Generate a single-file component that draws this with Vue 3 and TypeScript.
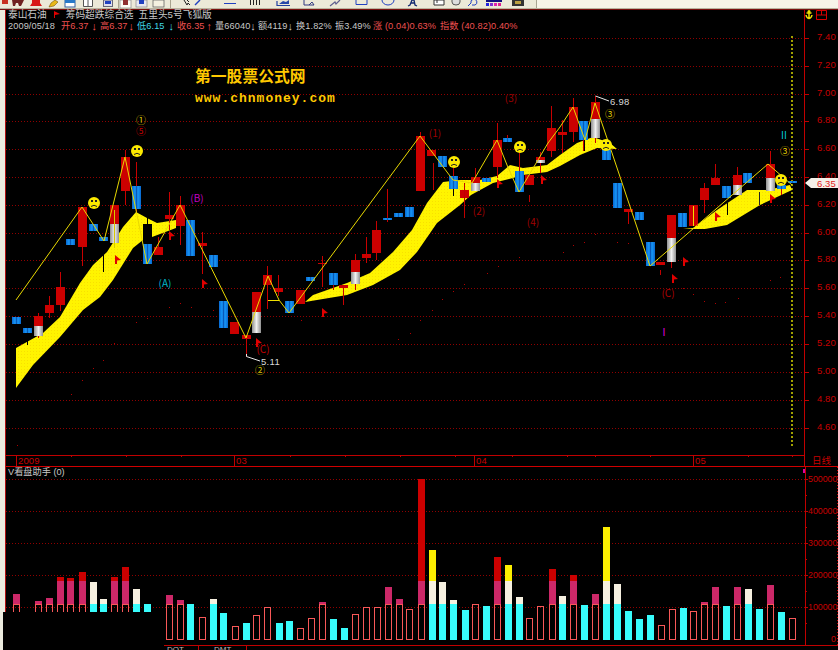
<script setup lang="ts">
type Kind = 'r' | 'b' | 'g' | 'k'
// left, body top, body bottom, wick top, wick bottom, kind, split (red/grey only)
type Candle = [number, number, number, number, number, Kind, number?]

const candles: Candle[] = [
  [12, 317, 324, 317, 324, 'b'], [23, 328, 333, 328, 333, 'b'], [34, 316, 336, 313, 338, 'g', 326],
  [45, 305, 313, 296, 318, 'r'], [56, 287, 305, 272, 311, 'r'], [66, 239, 245, 239, 245, 'b'],
  [78, 207, 247, 207, 266, 'r'], [89, 224, 231, 224, 231, 'b'], [99, 237, 241, 237, 241, 'b'],
  [110, 205, 243, 205, 248, 'g', 224], [121, 157, 191, 150, 205, 'r'], [132, 186, 209, 162, 213, 'b'],
  [143, 224, 243, 218, 247, 'k'], [143, 244, 264, 244, 264, 'b'], [154, 247, 255, 237, 255, 'r'],
  [165, 215, 219, 192, 230, 'r'], [176, 205, 226, 196, 245, 'r'], [186, 220, 256, 220, 256, 'b'],
  [198, 243, 246, 232, 274, 'r'], [209, 255, 267, 255, 267, 'b'], [219, 301, 328, 301, 328, 'b'],
  [230, 322, 334, 322, 334, 'r'], [242, 335, 339, 335, 357, 'r'], [252, 292, 333, 292, 333, 'g', 312],
  [263, 275, 285, 266, 309, 'r'], [274, 288, 292, 275, 296, 'r'], [285, 301, 313, 301, 313, 'b'],
  [296, 290, 304, 290, 304, 'r'], [306, 277, 281, 277, 281, 'b'], [318, 263, 264, 256, 287, 'r'],
  [329, 273, 285, 273, 290, 'b'], [339, 285, 288, 285, 305, 'r'], [351, 260, 284, 254, 290, 'g', 272],
  [362, 254, 258, 237, 263, 'r'], [372, 230, 253, 221, 260, 'r'], [383, 218, 220, 189, 222, 'b'],
  [394, 213, 217, 213, 217, 'b'], [405, 207, 217, 207, 217, 'b'], [416, 136, 191, 132, 191, 'r'],
  [427, 150, 156, 150, 156, 'r'], [438, 156, 167, 156, 167, 'b'], [449, 176, 189, 168, 196, 'b'],
  [460, 190, 198, 183, 218, 'r'], [471, 177, 191, 168, 191, 'g', 183], [482, 178, 182, 178, 182, 'b'],
  [493, 140, 167, 123, 178, 'r'], [503, 138, 142, 135, 142, 'b'], [515, 171, 192, 150, 192, 'b'],
  [525, 175, 185, 175, 185, 'r'], [536, 157, 163, 152, 173, 'g', 160], [547, 128, 151, 106, 157, 'r'],
  [558, 132, 135, 120, 153, 'r'], [569, 107, 132, 98, 142, 'r'], [579, 121, 140, 121, 151, 'b'],
  [591, 102, 138, 96, 143, 'g', 119], [602, 150, 160, 150, 160, 'b'], [613, 183, 208, 183, 208, 'b'],
  [624, 209, 212, 209, 224, 'r'], [635, 212, 220, 212, 220, 'b'], [646, 242, 266, 242, 266, 'b'],
  [656, 262, 265, 262, 265, 'r'], [667, 215, 262, 215, 268, 'g', 238], [678, 213, 227, 213, 227, 'b'],
  [689, 205, 226, 205, 226, 'r'], [700, 188, 200, 183, 213, 'r'], [711, 178, 185, 164, 185, 'r'],
  [722, 186, 198, 186, 198, 'b'], [733, 175, 195, 167, 195, 'g', 185], [743, 173, 183, 173, 183, 'b'],
  [766, 164, 191, 151, 191, 'g', 178], [777, 185, 189, 185, 195, 'b'], [788, 181, 183, 181, 183, 'b'],
]

// detached wick pieces and the thin lines that sit on the band
const strokes: [number, number, number, string][] = [
  [433, 163, 190, '#c00000'], [464, 183, 218, '#c00000'], [529, 195, 202, '#c00000'], [660, 270, 275, '#c00000'],
  [114, 210, 248, '#d8c800'], [693, 206, 226, '#f0e000'], [103, 253, 272, '#000'], [27, 340, 345, '#000'],
  [727, 203, 215, '#000'], [759, 192, 205, '#222'], [584, 140, 151, '#000'], [453, 189, 196, '#000'],
]

const bands = [
  '16,348 43,333 60,317 80,283 93,265 107,252 123,227 136,212 147,218 157,223 176,220 176,228 152,237 143,240 133,248 113,280 100,297 83,310 60,337 33,365 16,388',
  '305,302 313,295 347,283 370,273 393,252 412,230 427,203 443,182 460,180 480,180 497,176 510,165 523,168 547,165 560,155 577,143 593,137 610,143 617,149 597,148 580,155 560,166 547,172 523,175 513,178 493,183 471,195 460,205 437,223 417,252 400,270 373,285 347,295',
  '683,229 693,228 717,210 747,190 767,190 790,185 792,190 760,205 727,225 705,229',
]

const zigzag =
  '16,300 82,207 104,241 125,157 136,210 147,264 180,205 246,338 268,276 279,300 289,313 420,136 453,180 472,183 497,140 507,165 519,192 548,143 560,127 573,107 585,140 595,103 610,147 650,266 768,164 792,185'

const flags = [
  [115, 259], [169, 235], [202, 283], [256, 342], [322, 312], [497, 183], [541, 179], [683, 261], [672, 278], [715, 216], [770, 198],
]
const faces = [[137, 151], [94, 203], [454, 162], [520, 147], [606, 145], [781, 180]]

const dust = [
  [301, 320], [420, 320], [464, 284], [453, 291], [442, 299], [432, 310], [410, 333], [398, 339], [498, 266], [487, 273], [519, 257],
  [595, 234], [584, 242], [573, 245], [563, 252], [617, 242], [628, 243], [770, 280], [780, 277], [693, 294], [704, 301], [715, 303],
  [725, 302], [738, 298], [683, 288], [147, 318], [136, 322], [180, 303], [169, 307], [191, 307], [213, 310], [114, 343], [103, 360],
  [93, 368], [82, 380], [71, 394], [17, 445],
]

const marks: { x: number; y: number; text: string; color: string }[] = [
  { x: 141, y: 124, text: '①', color: '#e0d000' },
  { x: 141, y: 135, text: '⑤', color: '#c80000' },
  { x: 197, y: 202, text: '(B)', color: '#c000c0' },
  { x: 165, y: 287, text: '(A)', color: '#00b8c8' },
  { x: 263, y: 353, text: '(C)', color: '#c00000' },
  { x: 260, y: 374, text: '②', color: '#d8c800' },
  { x: 435, y: 137, text: '(1)', color: '#a00000' },
  { x: 479, y: 215, text: '(2)', color: '#a00000' },
  { x: 511, y: 102, text: '(3)', color: '#a00000' },
  { x: 533, y: 226, text: '(4)', color: '#a00000' },
  { x: 610, y: 118, text: '③', color: '#e0d000' },
  { x: 784, y: 139, text: 'II', color: '#00c8d8' },
  { x: 785, y: 155, text: '③', color: '#e0d000' },
  { x: 668, y: 297, text: '(C)', color: '#b00000' },
  { x: 664, y: 336, text: 'I', color: '#e000e0' },
]

const gridY = [38, 66, 94, 121, 149, 177, 205, 233, 260, 288, 316, 344, 372, 400, 428]
const priceLabels = ['7.40', '7.20', '7.00', '6.80', '6.60', '6.40', '6.20', '6.00', '5.80', '5.60', '5.40', '5.20', '5.00', '4.80', '4.60']

const shortTicks = [71, 126, 181, 290, 345, 400, 455, 512, 567, 595, 650, 748, 792]
const longTicks = [16, 234, 474, 693]

// center x, top y, up day?
const bars: [number, number, boolean][] = [
  [16, 594, true], [38, 601, true], [49, 598, true], [60, 577, true], [70, 578, true], [82, 572, true], [93, 582, false],
  [103, 599, false], [114, 577, true], [125, 567, true], [136, 589, false], [147, 604, false], [169, 595, true], [180, 600, true],
  [190, 604, false], [202, 617, true], [213, 599, false], [223, 613, false], [235, 626, true], [246, 623, false], [256, 615, true],
  [267, 607, true], [279, 623, false], [289, 621, false], [300, 628, true], [311, 618, true], [322, 602, true], [333, 619, false],
  [344, 628, false], [355, 614, true], [366, 607, true], [377, 607, true], [388, 587, true], [399, 599, true], [409, 609, true],
  [421, 479, true], [432, 550, false], [442, 582, false], [453, 600, false], [465, 610, false], [475, 604, true], [486, 606, false],
  [497, 557, true], [508, 565, false], [519, 597, false], [529, 618, true], [540, 606, true], [552, 569, true], [562, 596, false],
  [573, 575, true], [584, 605, false], [595, 594, true], [606, 527, false], [617, 584, false], [628, 611, false], [639, 619, false],
  [650, 615, false], [661, 625, true], [672, 609, true], [683, 608, false], [693, 611, true], [704, 602, true], [715, 587, true],
  [726, 606, false], [737, 587, true], [748, 589, false], [759, 609, false], [770, 585, true], [781, 612, false], [792, 618, true],
]
const LOW = 604
const HIGH = 581
const BASE = 639

const volumeGrid = [479, 511, 543, 575, 607]
const volumeLabels = [
  { y: 482, text: '500000' }, { y: 514, text: '400000' }, { y: 546, text: '300000' },
  { y: 578, text: '200000' }, { y: 610, text: '100000' },
]

const quotes = [
  { w: 53, label: '2009/05/18', color: '#c8c8c8' },
  { w: 39, label: '开6.37', color: '#ee5050', arrow: '↓' },
  { w: 37, label: '高6.37', color: '#ee5050', arrow: '↓' },
  { w: 40, label: '低6.15', color: '#40d8e8', arrow: '↓' },
  { w: 38, label: '收6.35', color: '#ee5050', arrow: '↑' },
  { w: 43, label: '量66040', color: '#c8c8c8', arrow: '↓' },
  { w: 38, label: '额4119', color: '#c8c8c8', arrow: '↓' },
  { w: 39, label: '换1.82%', color: '#c8c8c8' },
  { w: 38, label: '振3.49%', color: '#c8c8c8' },
  { w: 67, label: '涨 (0.04)0.63%', color: '#ee5050' },
  { w: 80, label: '指数 (40.82)0.40%', color: '#ee5050' },
]

const toolbarSeparators = [118, 170, 536]
</script>

<template>
  <div class="app">
    <div class="toolbar">
      <svg width="838" height="10" viewBox="0 0 838 10">
        <rect x="537" width="301" height="8" fill="#f7f4e8" />
        <rect x="2" y="0" width="6" height="4" fill="#c83020" />
        <path d="M12 0h12l-3 6h-2l-1-3h-2l-1 3h-2z" fill="#702020" />
        <path d="M30 6h12l-2-3V0h-8v3z" fill="#d81818" />
        <path d="M49 7l2-4 4-3 3 2-4 4z" fill="#e8b818" stroke="#604000" stroke-width=".5" />
        <rect x="65" y="0" width="10" height="7" fill="#fff" stroke="#3060a0" />
        <rect x="65" y="0" width="10" height="3" fill="#2878c8" />
        <path d="M83.5 0v6.5h9V0M88 0v6" fill="#fff" stroke="#555" />
        <rect x="103.5" y="0" width="9" height="6.5" fill="#dde" stroke="#667" />
        <rect x="105" y="1" width="6" height="3" fill="#2040c0" />
        <rect x="120" y="0" width="11" height="8" fill="#fdfcf4" stroke="#888" stroke-width=".7" />
        <rect x="123" y="0" width="5" height="5" fill="#903030" />
        <rect x="136" y="0" width="11" height="7" fill="#e8e8f0" stroke="#888" stroke-width=".7" />
        <rect x="139" y="0" width="5" height="4" fill="#2040c0" />
        <rect x="153" y="0" width="11" height="7" fill="#f4f0e0" stroke="#555" stroke-width=".7" />
        <path d="M184 0l3 5 1-2 2 2M187 0l2 2" fill="none" stroke="#222" />
        <path d="M195 5l5-5" stroke="#2040c0" stroke-width="1.4" />
        <path d="M224 3.500h12" stroke="#2040c0" />
        <path d="M250.500 0v5M253.500 0v5M256.500 0v5M259.500 0v5" stroke="#222" />
        <path d="M277 1v4.500h13" fill="none" stroke="#2040a0" stroke-width="1.200" />
        <path d="M279 4l4-3 3 1 3-2v4h-10z" fill="#2848a8" />
        <path d="M304 0v5h10l-2-3-3 3" fill="none" stroke="#303880" />
        <path d="M330 6l5-4 1 2 4-4" fill="none" stroke="#606090" stroke-width="1.200" />
        <path d="M356 0v4.500h11V0" fill="none" stroke="#2040c0" />
        <path d="M382 0a6 5 0 0 0 12 0" fill="none" stroke="#2040c0" />
        <path d="M408 6l2-1 2-5h2l1 5 2 1M411 3h4" fill="none" stroke="#102870" stroke-width="1.300" />
        <path d="M434 0h10v5h-10zM437 0v3" fill="#fff" stroke="#333" />
        <path d="M452 0v2a4 3 0 0 0 8 0V0" fill="#ddd" stroke="#555" />
        <path d="M468 6l3-3a3 3 0 1 1 4 2h-3" fill="none" stroke="#2040c0" />
        <g>
          <rect x="486" y="0" width="16" height="2" fill="#101080" />
          <rect x="486" y="3" width="3" height="3" fill="#2020e0" />
          <rect x="490" y="3" width="3" height="3" fill="#8030d0" />
          <rect x="494" y="3" width="3" height="3" fill="#e020b0" />
          <rect x="498" y="3" width="3" height="3" fill="#e02090" />
        </g>
        <rect x="512" y="0" width="12" height="6" fill="#333" />
        <rect x="515" y="1" width="6" height="3" fill="#bba040" />
        <path
          v-for="x in toolbarSeparators"
          :key="x"
          :d="`M${x + 0.5} 0v8`"
          stroke="#a8a490"
        />
        <rect y="8" width="838" height="1" fill="#b8b4a0" />
        <rect y="9" width="838" height="1" fill="#7a1010" />
      </svg>
    </div>

    <div class="workspace">
      <div class="edge"></div>
      <div class="panels">
        <section class="price-panel">
          <svg class="canvas" width="832" height="456" viewBox="6 10 832 456">
            <defs>
              <linearGradient id="blue-body">
                <stop offset="0" stop-color="#0868d0" />
                <stop offset=".35" stop-color="#1898f8" />
                <stop offset=".5" stop-color="#0858b8" />
                <stop offset=".65" stop-color="#1898f8" />
                <stop offset="1" stop-color="#0868d0" />
              </linearGradient>
              <linearGradient id="grey-body">
                <stop offset="0" stop-color="#909090" />
                <stop offset=".5" stop-color="#f0f0f0" />
                <stop offset="1" stop-color="#909090" />
              </linearGradient>
              <pattern id="band-dither" width="3" height="3" patternUnits="userSpaceOnUse">
                <rect width="3" height="3" fill="#fff400" />
                <rect width="1" height="1" fill="#f8e000" />
              </pattern>
            </defs>

            <path
              v-for="y in gridY"
              :key="y"
              :d="`M6 ${y + 0.5}H804`"
              class="grid"
            />
            <path v-for="y in gridY" :key="'t' + y" :d="`M805 ${y + 0.5}h4`" class="tick" />
            <path d="M792 36V446" class="olive" />

            <polygon v-for="p in bands" :key="p" :points="p" fill="url(#band-dither)" />
            <rect v-for="d in dust" :key="d.join()" :x="d[0]" :y="d[1]" width="1" height="1" fill="#b00000" />

            <g v-for="(c, i) in candles" :key="i" shape-rendering="crispEdges">
              <rect :x="c[0] + 4" :y="c[3]" width="1" :height="c[4] - c[3]" :fill="c[5] === 'k' ? '#000' : '#c80000'" />
              <rect
                v-if="c[5] === 'b'"
                :x="c[0]"
                :y="c[1]"
                width="9"
                :height="c[2] - c[1]"
                fill="url(#blue-body)"
              />
              <rect
                v-else-if="c[5] === 'k'"
                :x="c[0]"
                :y="c[1]"
                width="9"
                :height="c[2] - c[1]"
                fill="#000"
              />
              <template v-else-if="c[5] === 'g'">
                <rect :x="c[0]" :y="c[1]" width="9" :height="(c[6] ?? 0) - c[1]" fill="#cc0000" />
                <rect :x="c[0]" :y="c[6]" width="9" :height="c[2] - (c[6] ?? 0)" fill="url(#grey-body)" />
              </template>
              <rect v-else :x="c[0]" :y="c[1]" width="9" :height="c[2] - c[1]" fill="#cc0000" />
            </g>
            <rect v-for="s in strokes" :key="s.join()" :x="s[0]" :y="s[1]" width="1" :height="s[2] - s[1]" :fill="s[3]" />
            <rect x="268" y="300" width="11" height="1" fill="#f0e000" />

            <polyline :points="zigzag" fill="none" stroke="#e8d800" stroke-width="1" />

            <polygon
              v-for="f in flags"
              :key="f.join()"
              :points="`${f[0]},${f[1] - 4} ${f[0] + 6},${f[1] + 1} ${f[0] + 2},${f[1] + 1.5} ${f[0] + 2},${f[1] + 5} ${f[0]},${f[1] + 5}`"
              fill="#e00000"
            />

            <g v-for="f in faces" :key="f.join()" :transform="`translate(${f[0]} ${f[1]})`">
              <circle r="6" fill="#fbe900" />
              <rect x="-3" y="-3" width="2" height="2" fill="#222" />
              <rect x="1" y="-3" width="2" height="2" fill="#222" />
              <path d="M-3 3.500q3-2.500 6 0" fill="none" stroke="#222" />
            </g>

            <text
              v-for="m in marks"
              :key="m.x + m.text"
              :x="m.x"
              :y="m.y"
              :fill="m.color"
              class="mark"
            >{{ m.text }}</text>

            <path d="M595.500 96L609 101" class="leader" />
            <text x="610" y="105" class="price-note">6.98</text>
            <path d="M246.500 354v2.500L260 361" class="leader" fill="none" />
            <text x="261" y="365" class="price-note">5.11</text>

            <text x="195" y="82" class="brand">第一股票公式网</text>
            <text x="195" y="102" class="brand-url">www.chnmoney.com</text>

            <rect x="804" y="10" width="1" height="456" fill="#c00000" />
            <text
              v-for="(t, i) in priceLabels"
              :key="t"
              x="817"
              :y="gridY[i] + 2"
              class="axis-label"
            >{{ t }}</text>

            <path d="M809 11v7M806.500 13h5M806 15q.5 3 3 3.500q2.500-.5 3-3.500" fill="none" stroke="#f0e000" stroke-width="1.500" />
            <circle cx="809" cy="11.500" r="1.500" fill="#f0e000" />
            <path d="M816.500 10.500h10v9h-10zM816.500 15h10M821.500 10.500v4.500" fill="none" stroke="#d80000" />

            <polygon points="805,183 811,178 838,178 838,188 811,188" fill="#f4f0e8" />
            <text x="817" y="186.500" class="axis-label current">6.35</text>

            <path d="M6 455.500H804" stroke="#c00000" />
            <path v-for="x in shortTicks" :key="x" :d="`M${x + 0.5} 455v2`" stroke="#c00000" />
            <path v-for="x in longTicks" :key="x" :d="`M${x + 0.5} 455v11`" stroke="#c00000" />
            <text x="18" y="464" class="axis-label">2009</text>
            <text x="236" y="464" class="axis-label">03</text>
            <text x="476" y="464" class="axis-label">04</text>
            <text x="695" y="464" class="axis-label">05</text>
            <text x="812" y="464" class="axis-label cjk">日线</text>
          </svg>

          <div class="title-row">
            <span>泰山石油</span>
            <svg class="flag" width="6" height="7" viewBox="0 0 6 7"><path d="M0 0l6 3-5 1v3H0z" fill="#e00000" /></svg>
            <span>筹码超跌综合选</span>
            <span>五里头5号飞狐版</span>
          </div>
          <div class="quote-row">
            <span
              v-for="q in quotes"
              :key="q.label"
              class="quote"
              :style="{ width: q.w + 'px', color: q.color }"
            >
              <span>{{ q.label }}</span>
              <span v-if="q.arrow" class="arrow">{{ q.arrow }}</span>
            </span>
          </div>
        </section>

        <section class="volume-panel">
          <svg class="canvas" width="832" height="184" viewBox="6 466 832 184">
            <path d="M6 466.500H838" stroke="#d00000" />
            <path
              v-for="y in volumeGrid"
              :key="y"
              :d="`M6 ${y + 0.5}H805`"
              class="grid"
            />

            <g v-for="b in bars" :key="b[0]" shape-rendering="crispEdges">
              <template v-if="b[2]">
                <rect :x="b[0] - 2.5" :y="Math.max(b[1], LOW) + 0.5" width="6" :height="BASE - Math.max(b[1], LOW)" fill="none" stroke="#f85858" />
                <rect v-if="b[1] < LOW" :x="b[0] - 3" :y="Math.max(b[1], HIGH)" width="7" :height="LOW - Math.max(b[1], HIGH)" fill="#cc2868" />
                <rect v-if="b[1] < HIGH" :x="b[0] - 3" :y="b[1]" width="7" :height="HIGH - b[1]" fill="#cc0000" />
              </template>
              <template v-else>
                <rect :x="b[0] - 3" :y="Math.max(b[1], LOW)" width="7" :height="BASE + 1 - Math.max(b[1], LOW)" fill="#38fcfc" />
                <rect v-if="b[1] < LOW" :x="b[0] - 3" :y="Math.max(b[1], HIGH)" width="7" :height="LOW - Math.max(b[1], HIGH)" fill="#f6f0e0" />
                <rect v-if="b[1] < HIGH" :x="b[0] - 3" :y="b[1]" width="7" :height="HIGH - b[1]" fill="#fcee00" />
              </template>
            </g>

            <path d="M164 645.500H838" stroke="#c00000" />
            <path d="M198.500 645v5M246.500 645v5" stroke="#c00000" />
            <text x="167" y="652" class="tab-label">DOT</text>
            <text x="214" y="652" class="tab-label">DMT</text>

            <rect x="805" y="467" width="1" height="178" fill="#c00000" />
            <path d="M837.500 467V645" class="grid strong" />
            <rect x="803" y="469" width="2" height="4" fill="#e000a0" />
            <path v-for="y in volumeGrid" :key="'m' + y" :d="`M805 ${y + 16.5}h2`" class="tick" />
            <path v-for="y in volumeGrid" :key="'n' + y" :d="`M805 ${y + 0.5}h3`" class="tick" />
            <text
              v-for="l in volumeLabels"
              :key="l.text"
              x="808"
              :y="l.y"
              class="axis-label narrow"
            >{{ l.text }}</text>
            <text x="831" y="642" class="axis-label narrow">0</text>
          </svg>
          <div class="volume-title">V看盘助手 (0)</div>
        </section>
      </div>
      <div class="corner-mask"></div>
    </div>
  </div>
</template>

<style scoped>
.app {
  width: 838px;
  height: 650px;
  overflow: hidden;
  background: #000;
  font-family: "Liberation Sans", "Noto Sans CJK SC", sans-serif;
}
.toolbar {
  height: 10px;
  background: #ece9d8;
}
.toolbar svg {
  display: block;
}
.workspace {
  position: relative;
  display: flex;
  height: 640px;
}
.edge {
  width: 5px;
  background: #ecebdf;
  border-right: 1px solid #b01010;
}
.panels {
  flex: 1;
  display: flex;
  flex-direction: column;
}
.price-panel {
  position: relative;
  height: 456px;
}
.volume-panel {
  position: relative;
  height: 184px;
}
.canvas {
  position: absolute;
  inset: 0;
  display: block;
}
.title-row,
.quote-row,
.volume-title {
  position: relative;
  padding-left: 2px;
  font-size: 9.7px;
  line-height: 11px;
  color: #c8c8c8;
  white-space: nowrap;
}
.title-row {
  display: flex;
  align-items: center;
  height: 11px;
  margin-top: -1px;
  gap: 5px;
}
.title-row .flag {
  margin: 0 1px 0 2px;
}
.quote-row {
  display: flex;
  height: 11px;
  margin-top: 1px;
}
.quote {
  display: flex;
  justify-content: space-between;
  padding-right: 3px;
  box-sizing: border-box;
  flex: none;
  font-size: 9.2px;
  letter-spacing: 0.1px;
}
.arrow {
  font-size: 11px;
  font-weight: 700;
}
.volume-title {
  padding-top: 1px;
  font-size: 9.2px;
}

.grid {
  stroke: #900000;
  stroke-dasharray: 1 2;
  fill: none;
}
.grid.strong {
  stroke: #d00000;
}
.tick {
  stroke: #c00000;
}
.olive {
  stroke: #a0a000;
  stroke-width: 2;
  stroke-dasharray: 2 2;
  fill: none;
}
.mark {
  font-family: "Noto Sans CJK SC", sans-serif;
  font-size: 10px;
  text-anchor: middle;
}
.leader {
  stroke: #e8e8e8;
  stroke-width: 1;
  fill: none;
}
.price-note {
  font-size: 9.5px;
  fill: #d8d8d8;
  letter-spacing: 0.3px;
}
.brand {
  font-family: "Noto Sans CJK SC", sans-serif;
  font-size: 15.8px;
  font-weight: 700;
  fill: #ffc800;
}
.brand-url {
  font-family: "Liberation Mono", monospace;
  font-size: 13px;
  font-weight: 700;
  letter-spacing: 1px;
  fill: #ffc800;
}
.axis-label {
  font-family: "Liberation Sans", "Noto Sans CJK SC", sans-serif;
  font-size: 9.5px;
  fill: #c80000;
  letter-spacing: 0.1px;
}
.axis-label.narrow {
  font-size: 8.8px;
  letter-spacing: 0;
}
.axis-label.cjk {
  font-size: 9.5px;
}
.axis-label.current {
  fill: #e02020;
}
.tab-label {
  font-size: 8px;
  fill: #bbb;
}
.corner-mask {
  position: absolute;
  left: 3px;
  bottom: 0;
  width: 161px;
  height: 38px;
  background: #000;
}
</style>
